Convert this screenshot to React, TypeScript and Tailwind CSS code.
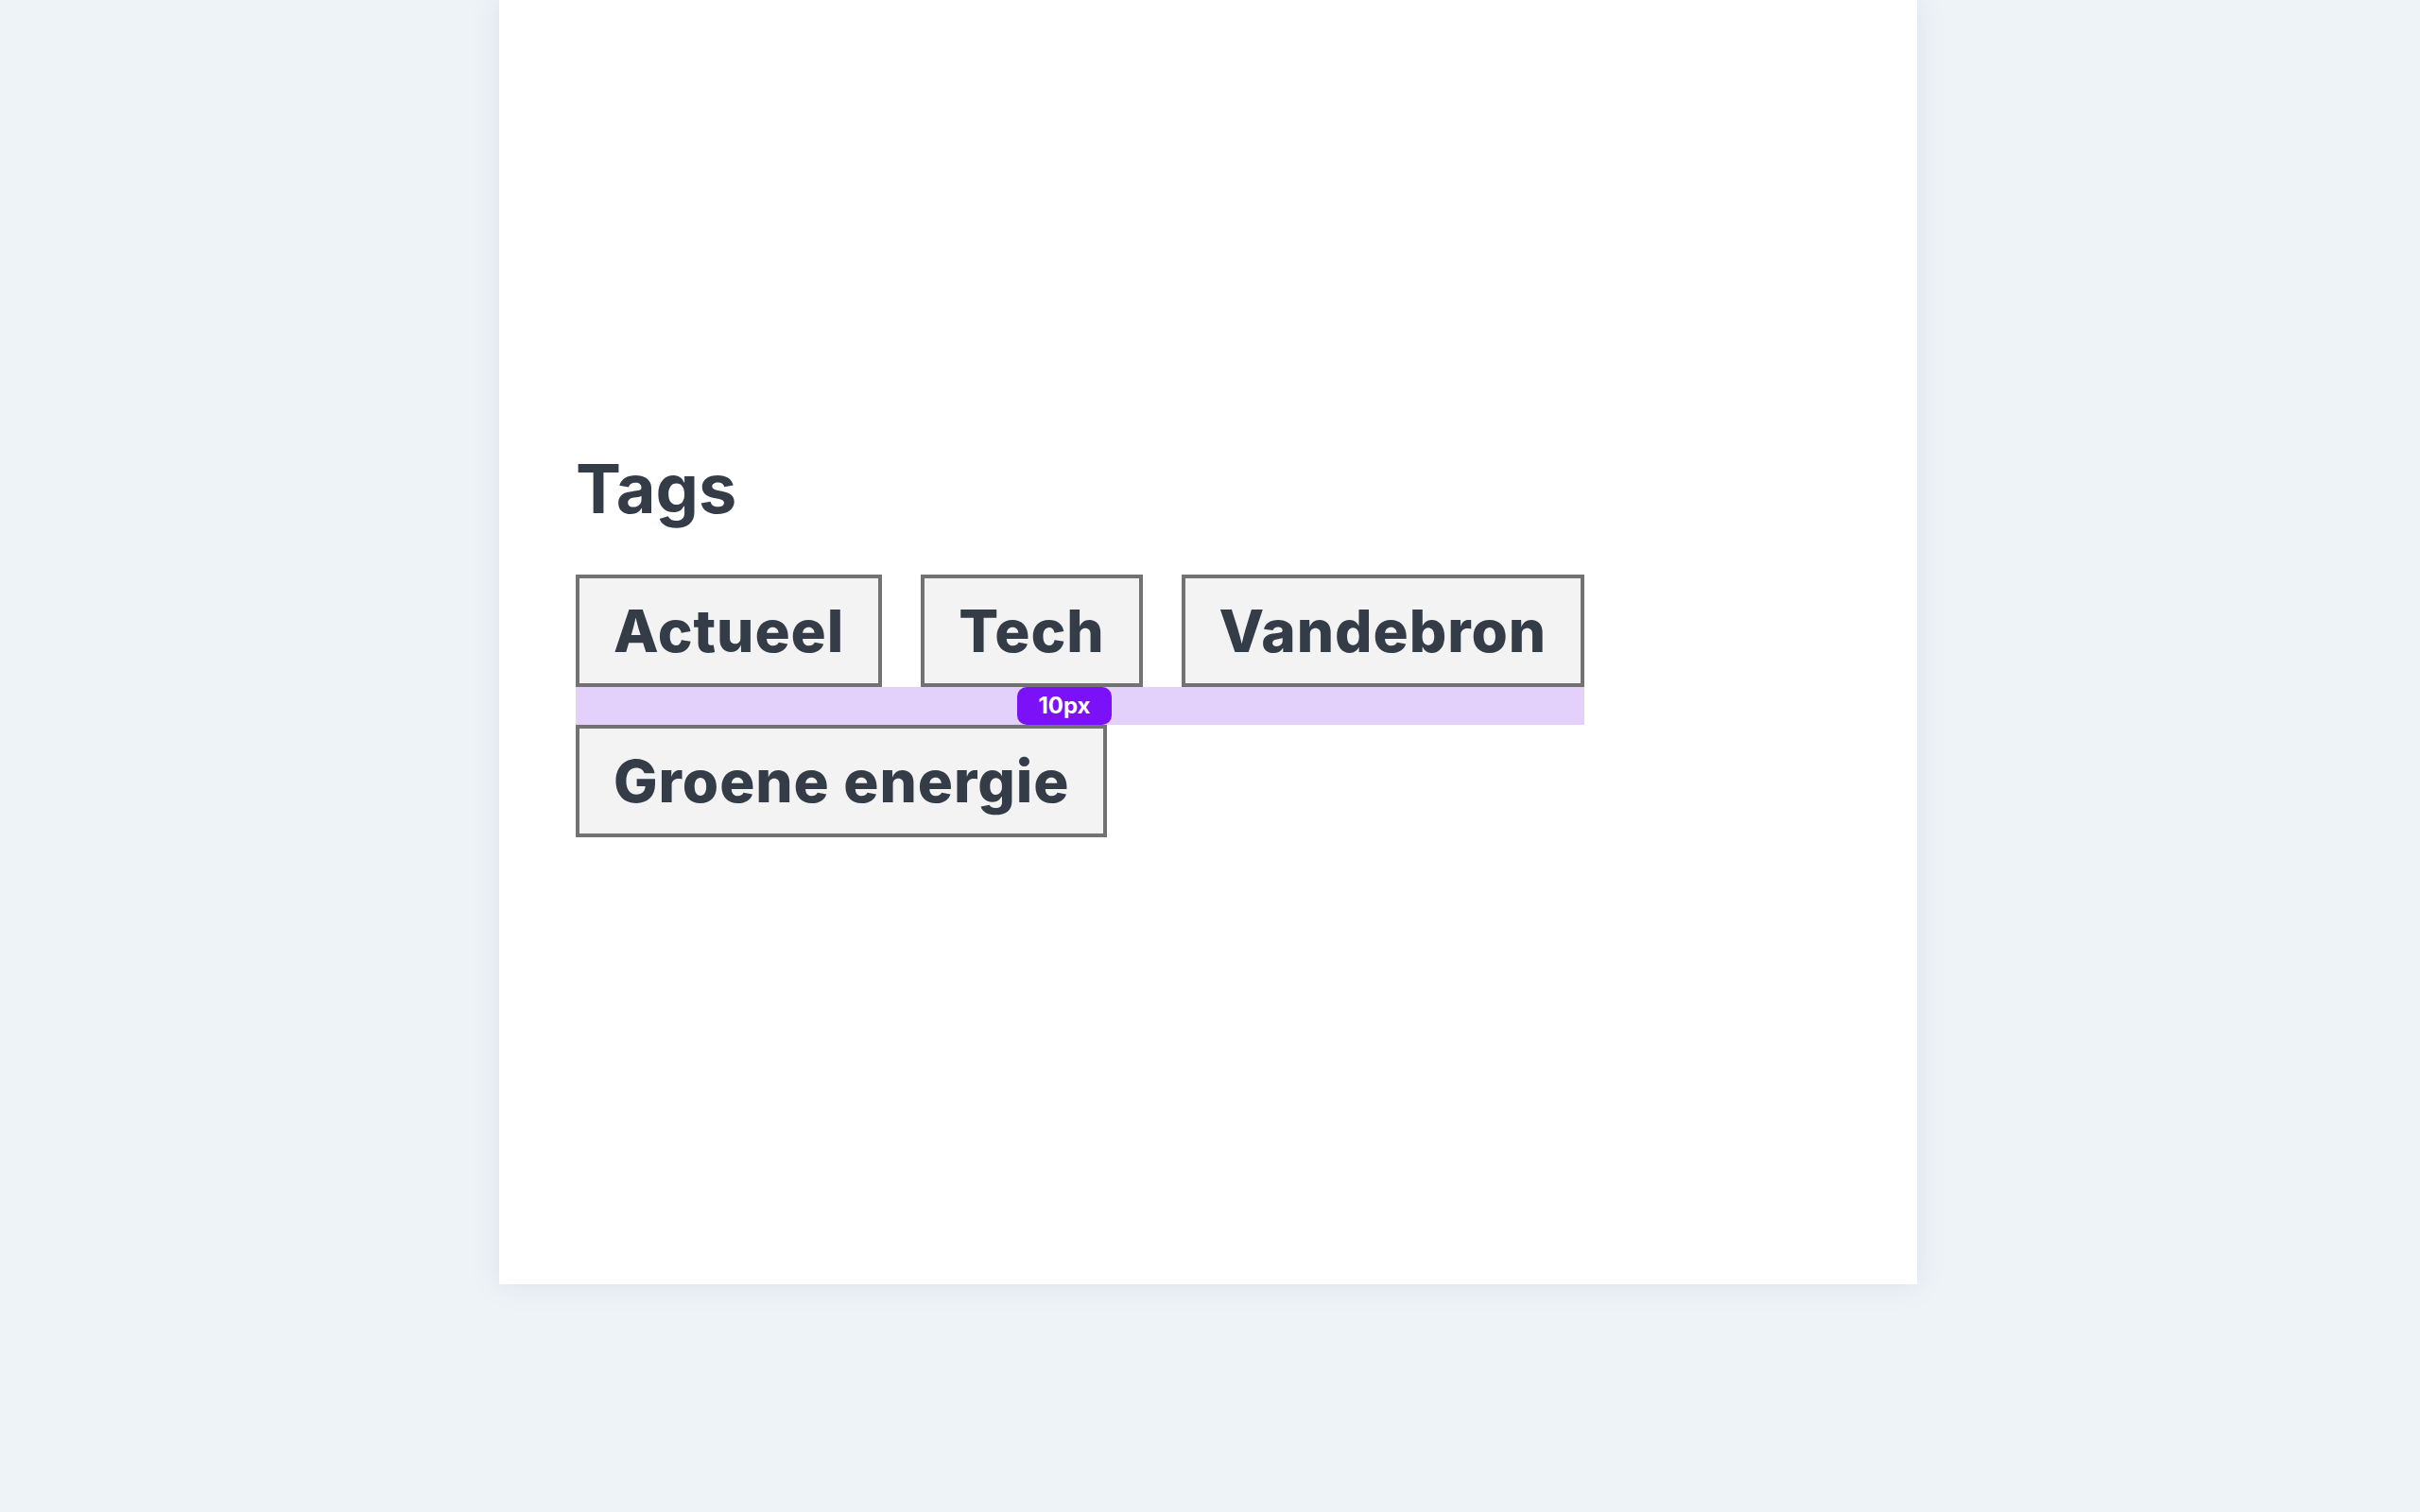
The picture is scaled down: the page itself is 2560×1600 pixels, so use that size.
import React from 'react';

const tags = ['Actueel', 'Tech', 'Vandebron', 'Groene energie'];

export default function App() {
	return (
		<div
			className="min-h-screen w-full bg-[#eef3f7]"
			style={{ fontFamily: 'Inter, "Noto Sans", sans-serif' }}
		>
			<div className="ml-[528px] w-[1500px] h-[1359px] bg-white shadow-[0_0_28px_rgba(100,120,140,0.14)]">
				<div className="pl-[81px] pt-[474px]">
					<h2 className="text-[72px] leading-[1.2] font-bold text-[#343d47]">
						Tags
					</h2>

					{/* Lista de tags */}
					<div className="relative mt-[48px] w-[1080px] flex flex-wrap gap-x-[41px] gap-y-[40px]">
						{tags.map((tag) => (
							<span
								key={tag}
								className="h-[119px] flex items-center px-[36px] border-4 border-[#727272] bg-[#f3f3f3] text-[62px] leading-none font-extrabold tracking-[0.015em] text-[#343d47]"
							>
								{tag}
							</span>
						))}

						{/* Indicador de gap */}
						<div className="absolute left-0 top-[119px] w-[1067px] h-[40px] bg-[#e3d1fc]">
							<div className="absolute left-[467px] top-0 w-[100px] h-[40px] rounded-[10px] bg-[#7a11f6] flex items-center justify-center text-white text-[24px] font-bold">
								10px
							</div>
						</div>
					</div>
				</div>
			</div>
		</div>
	);
}
